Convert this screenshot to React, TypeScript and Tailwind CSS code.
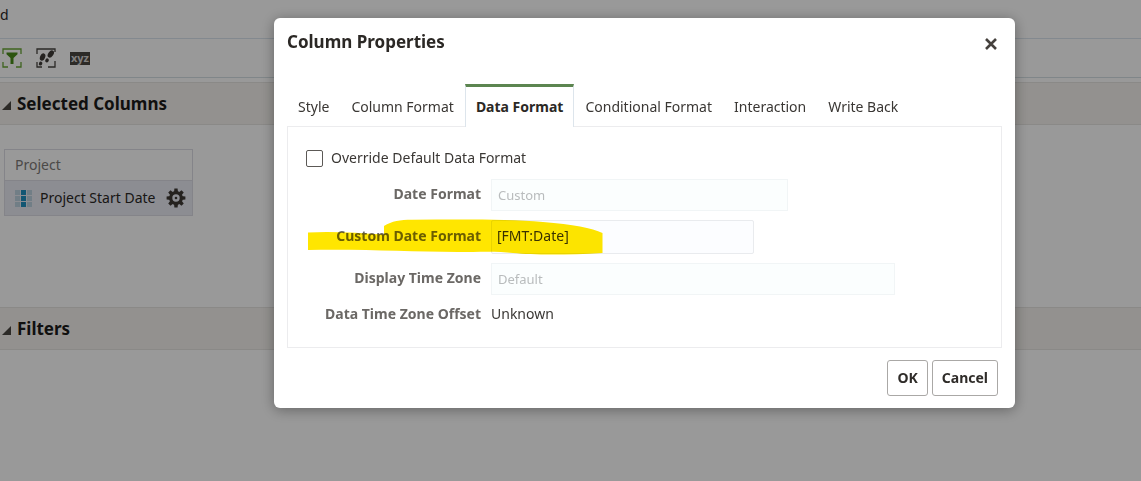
import { useState } from "react";
import { clsx } from "clsx";

const TABS = [
  "Style",
  "Column Format",
  "Data Format",
  "Conditional Format",
  "Interaction",
  "Write Back",
];

function FilterIcon() {
  return (
    <svg width="20" height="20" viewBox="0 0 20 20" fill="none" stroke="#69a636" strokeWidth="1.3">
      <path d="M1 6V1h18v5M1 14v5h5M14 19h5v-5" />
      <path d="M4.5 4.5h11v1.8l-4 3.700v6h-3v-6l-4-3.700z" fill="#4a8c1c" stroke="none" />
    </svg>
  );
}

function StepsIcon() {
  return (
    <svg width="20" height="20" viewBox="0 0 20 20" fill="none" stroke="#4a4642" strokeWidth="1.3">
      <path d="M1 6V1h18v3M1 14v5h5M12 19h7v-6" />
      <g fill="#3f3b37" stroke="none">
        <ellipse cx="6.6" cy="9" rx="2.5" ry="3.9" transform="rotate(22 6.6 9)" />
        <ellipse cx="4.6" cy="15.6" rx="1.7" ry="2" transform="rotate(25 4.6 15.6)" />
        <ellipse cx="14.8" cy="6" rx="2.5" ry="4.1" transform="rotate(35 14.8 6)" />
        <ellipse cx="11" cy="12.4" rx="1.7" ry="2.1" transform="rotate(35 11 12.4)" />
      </g>
    </svg>
  );
}

function ColumnIcon() {
  return (
    <svg width="17" height="17" viewBox="0 0 17 17">
      {[0, 6, 12].map((y) => (
        <g key={y}>
          <rect x="0" y={y} width="5" height="5" fill="#bdd2df" />
          <rect x="6" y={y} width="5" height="5" fill="#1f8fc0" />
          <rect x="12" y={y} width="5" height="5" fill="#bdd2df" />
        </g>
      ))}
    </svg>
  );
}

function GearIcon() {
  return (
    <svg width="20" height="20" viewBox="0 0 20 20" fill="#3f3a35">
      {[0, 45, 90, 135, 180, 225, 270, 315].map((angle) => (
        <path key={angle} d="M7.900 5 8.400.6h3.200l.5 4.400z" transform={`rotate(${angle} 10 10)`} />
      ))}
      <circle cx="10" cy="10" r="5.3" fill="none" stroke="#3f3a35" strokeWidth="3.2" />
      <circle cx="10" cy="10" r="1.3" />
    </svg>
  );
}

function SectionHeader({ title }: { title: string }) {
  return (
    <div className="flex h-[43px] items-center gap-1.5 border-y border-[#e6e4e1] bg-[#f5f2ee] pl-0.5">
      <svg width="9" height="9" viewBox="0 0 9 9" className="mt-1">
        <path d="M9 0v9H0z" fill="#4a4642" />
      </svg>
      <h2 className="text-[17px] leading-5 font-bold text-[#1c1b1a]">{title}</h2>
    </div>
  );
}

function AnalysisPage() {
  return (
    <div className="text-[14px] leading-5 text-[#2b2825]">
      <div className="h-[39px] border-b border-[#dbe5ee] pt-[5px]">d</div>
      <div className="flex h-[39px] items-center gap-3.5 border-b border-[#d6e0e4] pl-0.5">
        <button type="button" aria-label="Filters">
          <FilterIcon />
        </button>
        <button type="button" aria-label="Selection steps">
          <StepsIcon />
        </button>
        <button
          type="button"
          className="h-[13px] w-5 bg-[#4a4642] text-center text-[11px] leading-[10px] font-bold text-[#d8d6d4]"
        >
          xyz
        </button>
      </div>

      <div className="pt-1">
        <SectionHeader title="Selected Columns" />
        <div className="h-[182px] px-1 pt-6">
          <div className="w-[189px] border border-[#dcdde4]">
            <div className="px-2.5 py-1 leading-[22px] text-[#7d7a78]">Project</div>
            <div className="flex h-[35px] items-center border-t border-[#dcdde4] bg-[#e9ebf4] pr-1.5 pl-2.5">
              <ColumnIcon />
              <span className="ml-2 whitespace-nowrap">Project Start Date</span>
              <button type="button" aria-label="Column options" className="ml-auto">
                <GearIcon />
              </button>
            </div>
          </div>
        </div>
        <SectionHeader title="Filters" />
      </div>
    </div>
  );
}

function HighlighterStroke() {
  return (
    <svg
      width="296"
      height="36"
      viewBox="0 0 296 36"
      className="pointer-events-none absolute -top-px left-5 mix-blend-multiply"
    >
      <path
        d="M0 13.5C25 12 50 14 76 15.500L76 7C84 2 92 1 104 .8C150 .4 200 0 235 3C265 5.500 284 9 294.500 14V34C260 36 225 36 205 34C190 32 170 33 150 33C100 33 60 30 0 31z"
        fill="#ffe600"
      />
    </svg>
  );
}

function DataFormatForm() {
  const [override, setOverride] = useState(false);
  const [format, setFormat] = useState("[FMT:Date]");
  const row = "grid grid-cols-[193px_1fr] gap-x-2.5";
  const label = "text-right font-bold text-[#6b6865]";
  const disabled =
    "h-8 appearance-none border border-[#f1f5f6] bg-[#fbfefe] px-1.5 text-[13px] text-[#b9bcbd]";

  return (
    <form className="grid gap-[9px] pt-[21px] pb-[23px] leading-5">
      <label className="mb-0.5 ml-[18px] flex items-center gap-2 justify-self-start">
        <input
          type="checkbox"
          checked={override}
          onChange={(e) => setOverride(e.target.checked)}
          className="size-[17px] appearance-none rounded-xs border border-[#5c5956] bg-white"
        />
        Override Default Data Format
      </label>
      <div className={row}>
        <label htmlFor="date-format" className={clsx(label, "pt-[5px]")}>
          Date Format
        </label>
        <select id="date-format" disabled className={clsx(disabled, "w-[297px]")}>
          <option>Custom</option>
        </select>
      </div>
      <div className={clsx(row, "relative")}>
        <label htmlFor="custom-format" className={clsx(label, "pt-1.5")}>
          Custom Date Format
        </label>
        <input
          id="custom-format"
          value={format}
          onChange={(e) => setFormat(e.target.value)}
          className="h-[34px] w-[263px] rounded-xs border border-[#e9ebee] bg-[#fcfdff] px-[5px] pb-1"
        />
        <HighlighterStroke />
      </div>
      <div className={row}>
        <label htmlFor="time-zone" className={clsx(label, "pt-[5px]")}>
          Display Time Zone
        </label>
        <select id="time-zone" disabled className={clsx(disabled, "w-[404px]")}>
          <option>Default</option>
        </select>
      </div>
      <div className={row}>
        <span className={label}>Data Time Zone Offset</span>
        <span>Unknown</span>
      </div>
    </form>
  );
}

function ColumnPropertiesDialog() {
  const [active, setActive] = useState("Data Format");
  const button =
    "h-9 rounded-[3px] border border-[#aaa8a6] bg-white px-[9px] leading-5 font-bold text-[#2f2c29]";

  return (
    <div
      role="dialog"
      aria-label="Column Properties"
      className="rounded-md bg-white px-[13px] pt-3.5 pb-3 text-[14px] text-[#3a3734] shadow-[0_2px_14px_rgba(0,0,0,0.35)]"
    >
      <div className="flex items-start justify-between">
        <h1 className="text-[17px] leading-5 font-bold text-[#2b2825]">Column Properties</h1>
        <button type="button" aria-label="Close" className="mt-1.5 mr-[5px]">
          <svg width="12" height="12" viewBox="0 0 12 12" stroke="#45413d" strokeWidth="2.6">
            <path d="M1 1l10 10M11 1L1 11" />
          </svg>
        </button>
      </div>

      <div role="tablist" className="mt-8 flex">
        {TABS.map((tab) => (
          <button
            key={tab}
            type="button"
            role="tab"
            aria-selected={tab === active}
            onClick={() => setActive(tab)}
            className={clsx(
              "border-t-3 leading-5 whitespace-nowrap",
              tab === active
                ? "relative -mb-px h-[43px] border-x border-x-[#dde5ec] border-t-[#5c8550] bg-white px-2.5 font-bold text-[#2b2825]"
                : "h-[42px] border-t-transparent px-[11px]",
            )}
          >
            {tab}
          </button>
        ))}
      </div>
      <div className="border border-[#ececee]">
        <DataFormatForm />
      </div>

      <div className="mt-3 mr-1 flex justify-end gap-1">
        <button type="button" className={button}>
          OK
        </button>
        <button type="button" className={button}>
          Cancel
        </button>
      </div>
    </div>
  );
}

export default function App() {
  return (
    <div className="min-h-screen bg-white font-['Noto_Sans',sans-serif]">
      <AnalysisPage />
      <div className="fixed inset-0 bg-black/40 pt-[18px] pr-[126px] pl-[274px]">
        <ColumnPropertiesDialog />
      </div>
    </div>
  );
}
